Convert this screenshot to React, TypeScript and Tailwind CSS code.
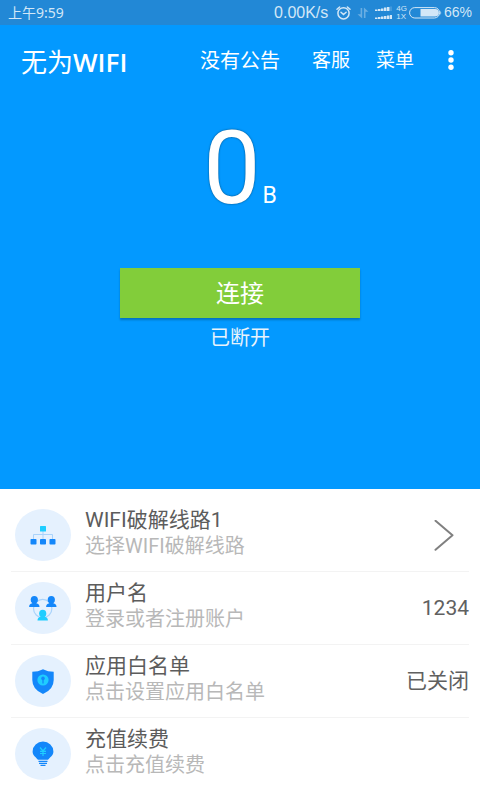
import type { ReactNode } from "react";

function AlarmIcon() {
  return (
    <svg width="15" height="14" viewBox="0 0 15 14" fill="none" stroke="currentColor" strokeWidth="1.5" strokeLinecap="round" aria-hidden="true">
      <circle cx="7.5" cy="7.3" r="5.6" />
      <path d="M1 3.2 3.6 1M14 3.2 11.4 1M5 6.3l2.5 2.2 2.6-2.2" />
    </svg>
  );
}

function TransferIcon() {
  return (
    <svg width="12" height="12" viewBox="0 0 12 12" fill="currentColor" className="opacity-40" aria-hidden="true">
      <path d="M3.6 1h1.600v10.500L.5 7.200h3.100zM6.900 11V.5L11.500 4.800H8.500V11z" />
    </svg>
  );
}

function SignalIcon() {
  return (
    <svg width="17" height="14" viewBox="0 0 17 14" fill="currentColor" aria-hidden="true">
      <path d="M0 3.5h2.5V5H0zM3 3h2.5v2H3zM6 2.5h2.5V5H6zM9 1.5h2.5V5H9zM12 1h2.5v4H12z" />
      <path d="M15.5 .5h1V5h-1z" opacity=".4" />
      <path d="M0 11.5h2.5V13H0zM3 11h2.5v2H3zM6 10.5h2.5V13H6zM9 10h2.5v3H9zM12 9.5h2.5V13H12zM15 9h2v4h-2z" />
    </svg>
  );
}

function BatteryIcon() {
  return (
    <svg width="33" height="12" viewBox="0 0 33 12" aria-hidden="true">
      <rect x=".6" y=".6" width="30" height="10.4" rx="5.2" fill="none" stroke="currentColor" />
      <path d="M11.500 2h14.600a3.800 3.800 0 0 1 0 7.600H11.500z" fill="currentColor" />
      <path d="M31.400 3.500q1.600 2.300 0 4.600z" fill="currentColor" />
    </svg>
  );
}

function NetworkIcon() {
  return (
    <svg width="56" height="52" viewBox="0 0 56 52" aria-hidden="true">
      <path d="M18.5 30v-4.5h19V30M28 20v10" fill="none" stroke="#a9d3fb" />
      <rect x="25" y="17" width="6" height="5.5" rx=".5" fill="#1fcdff" />
      <rect x="15.5" y="30" width="6" height="5.5" rx=".8" fill="#1487fa" />
      <rect x="25" y="30" width="6" height="5.5" rx=".8" fill="#1487fa" />
      <rect x="34.5" y="30" width="6" height="5.5" rx=".8" fill="#1487fa" />
    </svg>
  );
}

function UsersIcon() {
  return (
    <svg width="56" height="52" viewBox="0 0 56 52" aria-hidden="true">
      <circle cx="27.7" cy="26.5" r="9.2" fill="none" stroke="#a9d3fb" strokeWidth="1.2" />
      <g fill="#1487fa">
        <ellipse cx="19.3" cy="17.8" rx="3.6" ry="3.8" />
        <path d="M17.300 19h4v2.200q3.200.4 3.200 3.800H14.100q0-3.400 3.200-3.800z" />
        <ellipse cx="36.300" cy="17.800" rx="3.600" ry="3.800" />
        <path d="M34.300 19h4v2.200q3.200.4 3.200 3.800H31.100q0-3.400 3.200-3.800z" />
      </g>
      <g fill="#1fcdff">
        <ellipse cx="27.700" cy="31.500" rx="3.600" ry="3.800" />
        <path d="M25.700 33h4v1.800q3.200.4 3.200 3.800H22.500q0-3.400 3.200-3.800z" />
      </g>
    </svg>
  );
}

function ShieldIcon() {
  return (
    <svg width="56" height="52" viewBox="0 0 56 52" aria-hidden="true">
      <path d="M28 14.2q4.8 2.5 10.7 2.6V25q0 9.5-10.7 14Q17.3 34.5 17.3 25v-8.2q5.9-.1 10.700-2.600z" fill="#1487fa" />
      <circle cx="28" cy="25" r="5.600" fill="#1fcdff" />
      <circle cx="28" cy="23.400" r="1.800" fill="#1487fa" />
      <path d="M28 24v4.500" stroke="#1487fa" strokeWidth="1.300" />
    </svg>
  );
}

function BulbIcon() {
  return (
    <svg width="56" height="52" viewBox="0 0 56 52" aria-hidden="true">
      <path d="M28 13.500a10.400 9.900 0 0 1 10.400 9.900c0 4.200-3.400 5.600-5.400 8.400H23c-2-2.800-5.400-4.200-5.400-8.400A10.400 9.900 0 0 1 28 13.500z" fill="#1487fa" />
      <path d="M23.500 33.300h9M24 35.300h8M25.500 37.300h5" stroke="#1487fa" strokeWidth="1.200" />
      <path d="M25 19.500l3 3.500 3-3.500M25 23.300h6M25 25.500h6M28 23v5" fill="none" stroke="#1fcdff" strokeWidth="1.200" />
    </svg>
  );
}

type Item = {
  title: string;
  hint: string;
  icon: ReactNode;
  value?: ReactNode;
};

const items: Item[] = [
  {
    title: "WIFI破解线路1",
    hint: "选择WIFI破解线路",
    icon: <NetworkIcon />,
    value: (
      <svg width="20" height="32" viewBox="0 0 20 32" className="mr-[15px]" fill="none" stroke="#808080" strokeWidth="2" strokeLinecap="round" strokeLinejoin="round" aria-hidden="true">
        <path d="M1.500 .8 18.500 15.300 1.500 29.800" />
      </svg>
    ),
  },
  { title: "用户名", hint: "登录或者注册账户", icon: <UsersIcon />, value: "1234" },
  { title: "应用白名单", hint: "点击设置应用白名单", icon: <ShieldIcon />, value: "已关闭" },
  { title: "充值续费", hint: "点击充值续费", icon: <BulbIcon /> },
];

export default function App() {
  return (
    <div className="min-h-screen bg-white font-[Roboto,'Noto_Sans_CJK_SC',sans-serif]">
      <div className="bg-[#0399ff] h-[489px] flex flex-col text-white">
        <div className="h-[25px] shrink-0 bg-[#2288d6] px-2 flex items-center justify-between text-[#d3e7f7]">
          <span className="font-['Noto_Sans','Noto_Sans_CJK_SC',sans-serif] text-[14px] leading-[25px]">上午9:59</span>
          <div className="flex items-center font-['Liberation_Sans',sans-serif] text-[14px] leading-[25px]">
            <span className="text-[16px] mr-2">0.00K/s</span>
            <AlarmIcon />
            <span className="ml-1.5 mr-1.5"><TransferIcon /></span>
            <SignalIcon />
            <span className="flex flex-col text-[8px] leading-[8px] ml-1 mr-0.5">
              <span>4G</span>
              <span>1X</span>
            </span>
            <BatteryIcon />
            <span className="ml-0.5">66%</span>
          </div>
        </div>

        <header className="h-[70px] shrink-0 flex items-center pl-[21px] pr-[26px]">
          <h1 className="pt-1 text-[26px] leading-[32px]">
            无为<span className="font-['Open_Sans'] font-semibold">WIFI</span>
          </h1>
          <nav className="ml-auto flex items-center text-[19px] leading-[30px]">
            <button type="button" className="pt-0.5 text-[20px]">没有公告</button>
            <button type="button" className="pt-0.5 ml-8">客服</button>
            <button type="button" className="pt-0.5 ml-[26px]">菜单</button>
            <button type="button" aria-label="更多" className="ml-[34px]">
              <svg width="6" height="20" viewBox="0 0 6 20" fill="currentColor" aria-hidden="true">
                <circle cx="3" cy="2.700" r="2.700" />
                <circle cx="3" cy="10" r="2.700" />
                <circle cx="3" cy="17.300" r="2.700" />
              </svg>
            </button>
          </nav>
        </header>

        <main className="flex flex-col items-center pt-[13px]">
          <p className="flex items-baseline justify-center h-[120px] mb-10">
            <span className="text-[102px] leading-[120px] [text-shadow:0_0_2px_rgba(0,0,0,0.6)]">0</span>
            <span className="text-[23px] ml-0.5">B</span>
          </p>
          <button type="button" className="w-1/2 h-[50px] bg-[#82cd3a] text-[24px] leading-[52px] shadow-[0_2px_2px_rgba(0,0,0,0.25)]">
            连接
          </button>
          <p className="mt-1 text-[20px] leading-[32px] text-[#e9f3fb]">已断开</p>
        </main>
      </div>

      <ul className="pt-[10px] px-[11px]">
        {items.map((item) => (
          <li key={item.title} className="border-b border-[#f3f3f3] last:border-b-0">
            <button type="button" className="w-full h-[72px] flex items-center pl-1 text-left">
              <span className="w-[56px] h-[52px] shrink-0 rounded-[50%] bg-[#e5f1fe]">{item.icon}</span>
              <span className="ml-[14px] pb-1 flex flex-col">
                <span className="text-[21px] leading-[26px] text-[#5c5c5c]">{item.title}</span>
                <span className="text-[20px] leading-[26px] text-[#b8b8b8]">{item.hint}</span>
              </span>
              <span className="ml-auto pt-0.5 text-[21px] text-[#606060]">{item.value}</span>
            </button>
          </li>
        ))}
      </ul>
    </div>
  );
}
